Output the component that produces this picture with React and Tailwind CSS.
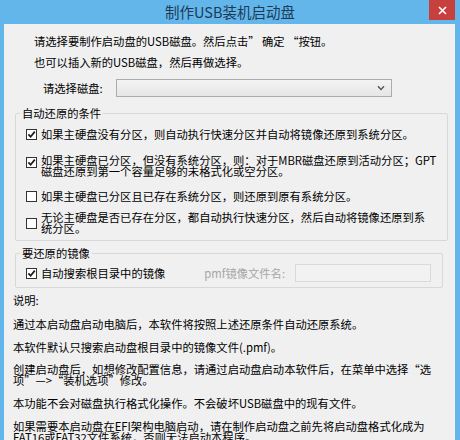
import React from "react";

const Check = ({ checked, className = "" }) => (
  <span
    className={
      "w-[11px] h-[11px] border border-[#333333] bg-white flex items-center justify-center shrink-0 " +
      className
    }
  >
    {checked && (
      <svg width="9" height="9" viewBox="0 0 9 9">
        <path d="M1.4 4.4 L3.6 6.8 L7.8 1.6" stroke="#1a1a1a" strokeWidth="1.7" fill="none" />
      </svg>
    )}
  </span>
);

export default function App() {
  return (
    <div className="w-[460px] h-[440px] overflow-hidden bg-[#62b6ea] flex flex-col font-['Noto_Sans_CJK_SC',sans-serif] text-[11.3px] text-black">
      {/* Title bar */}
      <div className="h-[24px] flex items-start shrink-0">
        <div className="w-[31px]" />
        <div className="flex-1 h-[24px] flex items-center justify-center text-[14.5px] text-[#1f3a57] leading-none">
          制作USB装机启动盘
        </div>
        <div className="w-[26px] h-[20px] mr-[5px] bg-[#c8403e] flex items-center justify-center">
          <svg width="9" height="9" viewBox="0 0 9 9">
            <path d="M1 1 L8 8 M8 1 L1 8" stroke="#ffffff" strokeWidth="1.6" />
          </svg>
        </div>
      </div>

      {/* Content */}
      <div className="flex-1 ml-[4px] mr-[5px] bg-[#f0f0f0] flex flex-col">
        <div className="mt-[10px] ml-[30px] leading-[14px] whitespace-nowrap">
          请选择要制作启动盘的USB磁盘。然后点击” 确定 “按钮。
        </div>
        <div className="mt-[7px] ml-[30px] leading-[14px] whitespace-nowrap">
          也可以插入新的USB磁盘，然后再做选择。
        </div>
        <div className="mt-[10px] flex items-center h-[18px]">
          <span className="ml-[39px] w-[73px] leading-[14px]">请选择磁盘:</span>
          <div className="w-[276px] h-[18px] border border-[#acacac] bg-linear-to-b from-[#f3f3f3] to-[#e6e6e6] flex items-center justify-end pr-[6px]">
            <svg width="8" height="6" viewBox="0 0 8 6">
              <path d="M1 1.2 L4 4.4 L7 1.2" stroke="#555555" strokeWidth="1.4" fill="none" />
            </svg>
          </div>
        </div>

        {/* Group 1 */}
        <fieldset className="mt-[9px] ml-[11px] mr-[7px] border border-[#d8d8d8] rounded-[2px] p-0 min-w-0">
          <legend className="ml-[4px] px-[2px] leading-[14px]">自动还原的条件</legend>
          <div className="pl-[10px] pt-[7px] pb-[6px] flex flex-col">
            <div className="flex items-center gap-[4px] leading-[14px] whitespace-nowrap">
              <Check checked />
              <span>如果主硬盘没有分区，则自动执行快速分区并自动将镜像还原到系统分区。</span>
            </div>
            <div className="mt-[14px] flex items-start gap-[4px] leading-[11px] whitespace-nowrap">
              <Check checked className="mt-[2px]" />
              <span>
                如果主硬盘已分区，但没有系统分区，则：对于MBR磁盘还原到活动分区；GPT
                <br />
                磁盘还原到第一个容量足够的未格式化或空分区。
              </span>
            </div>
            <div className="mt-[12px] flex items-center gap-[4px] leading-[14px] whitespace-nowrap">
              <Check />
              <span>如果主硬盘已分区且已存在系统分区，则还原到原有系统分区。</span>
            </div>
            <div className="mt-[9px] flex items-start gap-[4px] leading-[11px] whitespace-nowrap">
              <Check className="mt-[6px]" />
              <span>
                无论主硬盘是否已存在分区，都自动执行快速分区，然后自动将镜像还原到系
                <br />
                统分区。
              </span>
            </div>
          </div>
        </fieldset>

        {/* Group 2 */}
        <fieldset className="mt-[5px] ml-[11px] mr-[12px] border border-[#d8d8d8] rounded-[2px] p-0 min-w-0">
          <legend className="ml-[4px] px-[2px] leading-[14px]">要还原的镜像</legend>
          <div className="pl-[10px] pr-[11px] pt-[4px] pb-[5px] flex items-center h-[27px]">
            <Check checked />
            <span className="ml-[4px] leading-[14px] whitespace-nowrap">自动搜索根目录中的镜像</span>
            <span className="ml-[39px] text-[#a6a6a6] leading-[14px] whitespace-nowrap">pmf镜像文件名:</span>
            <div className="ml-auto w-[136px] h-[18px] border border-[#d9d9d9] bg-[#f2f2f2]" />
          </div>
        </fieldset>

        {/* Description */}
        <div className="ml-[9px] flex flex-col whitespace-nowrap">
          <div className="mt-[5px] leading-[14px]">说明:</div>
          <div className="mt-[10px] leading-[14px]">
            通过本启动盘启动电脑后，本软件将按照上述还原条件自动还原系统。
          </div>
          <div className="mt-[9px] leading-[14px]">本软件默认只搜索启动盘根目录中的镜像文件(.pmf)。</div>
          <div className="mt-[10px] leading-[11px]">
            创建启动盘后，如想修改配置信息，请通过启动盘启动本软件后，在菜单中选择“选
            <br />
            项”—>“装机选项”修改。
          </div>
          <div className="mt-[10px] leading-[14px]">
            本功能不会对磁盘执行格式化操作。不会破坏USB磁盘中的现有文件。
          </div>
          <div className="mt-[11px] leading-[11px]">
            如果需要本启动盘在EFI架构电脑启动，请在制作启动盘之前先将启动盘格式化成为
            <br />
            FAT16或FAT32文件系统，否则无法启动本程序。
          </div>
        </div>
      </div>
    </div>
  );
}
